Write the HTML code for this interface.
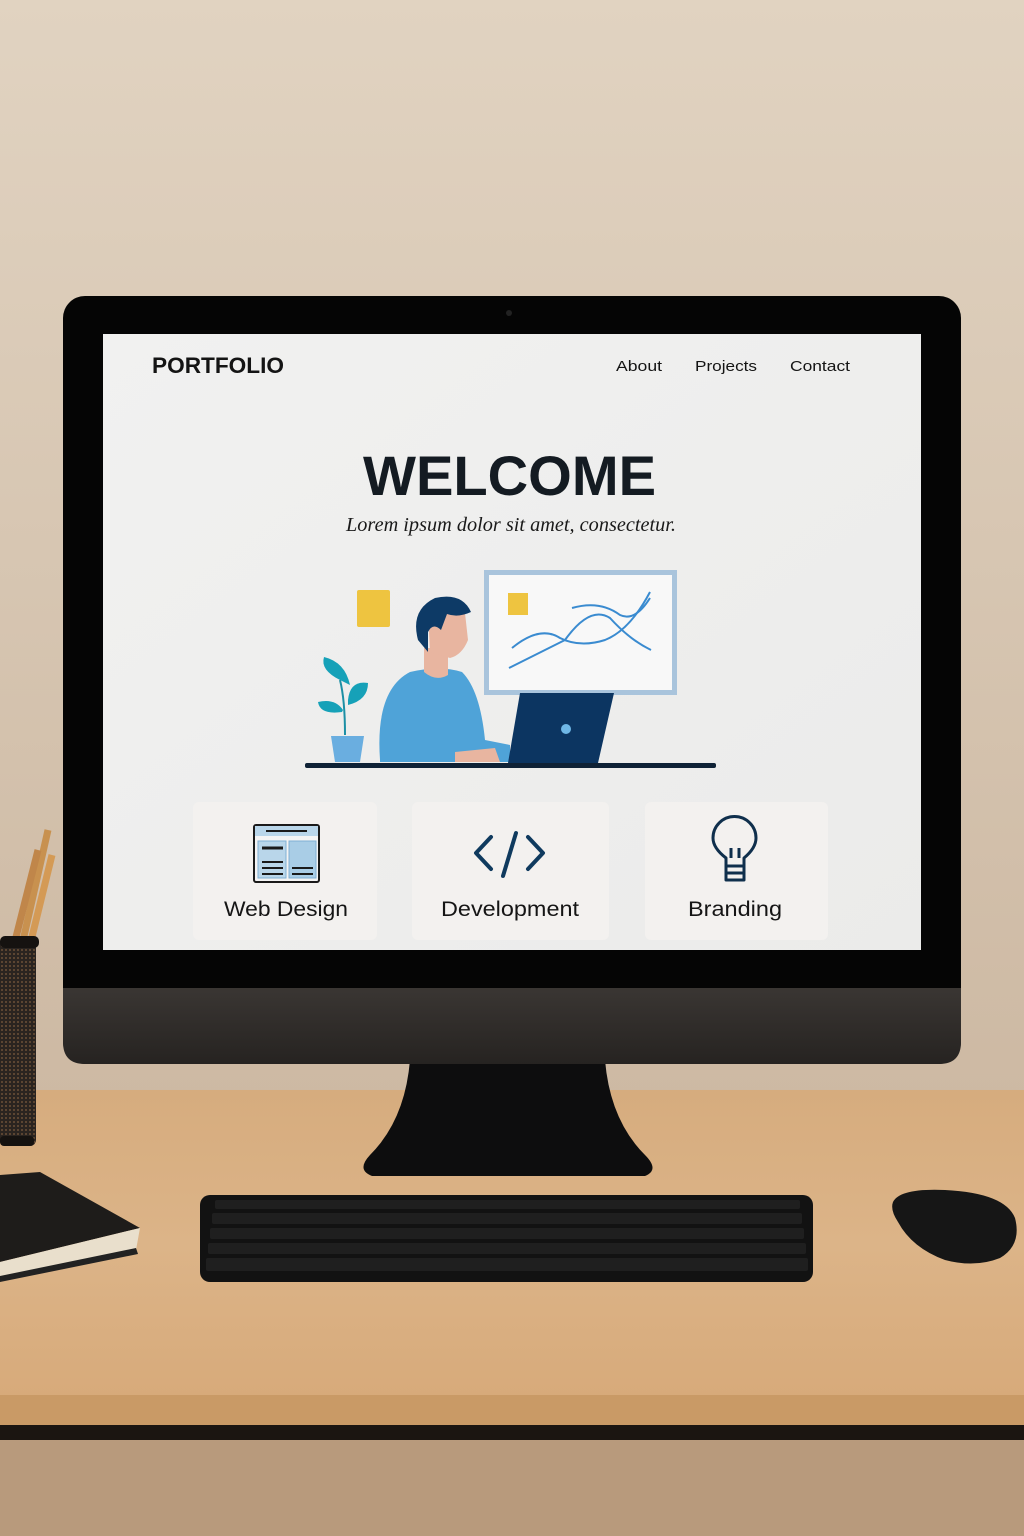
<!DOCTYPE html>
<html><head><meta charset="utf-8"><style>html,body{margin:0;padding:0;background:#ddd0bf}svg{display:block}</style></head>
<body>
<svg width="1024" height="1536" viewBox="0 0 1024 1536" xmlns="http://www.w3.org/2000/svg">
<defs>
<linearGradient id="wall" x1="0" y1="0" x2="0" y2="1">
<stop offset="0" stop-color="#e1d3c1"/><stop offset="1" stop-color="#cdb9a3"/></linearGradient>
<linearGradient id="desk" x1="0" y1="0" x2="0" y2="1">
<stop offset="0" stop-color="#d6ac7e"/><stop offset="0.5" stop-color="#dcb488"/><stop offset="1" stop-color="#d7aa7a"/></linearGradient>
<linearGradient id="screen" x1="0" y1="0" x2="1" y2="1">
<stop offset="0" stop-color="#f1f1f0"/><stop offset="1" stop-color="#ebebea"/></linearGradient>
<linearGradient id="chin" x1="0" y1="0" x2="0" y2="1">
<stop offset="0" stop-color="#3a3633"/><stop offset="1" stop-color="#262321"/></linearGradient>
<pattern id="mesh" width="4" height="4" patternUnits="userSpaceOnUse"><rect width="4" height="4" fill="#2a2420"/><circle cx="2" cy="2" r="1" fill="#6b5038"/></pattern>
</defs>
<rect width="1024" height="1100" fill="url(#wall)"/>
<rect y="1090" width="1024" height="310" fill="url(#desk)"/>
<rect y="1395" width="1024" height="30" fill="#c99a66"/>
<rect y="1425" width="1024" height="15" fill="#1b1511"/>
<rect y="1440" width="1024" height="96" fill="#b89a7c"/>
<!-- pencil cup -->
<line x1="22" y1="945" x2="48" y2="830" stroke="#c8914f" stroke-width="7"/>
<line x1="30" y1="945" x2="52" y2="855" stroke="#d49a55" stroke-width="7"/>
<line x1="14" y1="945" x2="38" y2="850" stroke="#c0864a" stroke-width="7"/>
<rect x="0" y="938" width="36" height="208" rx="6" fill="url(#mesh)"/>
<rect x="0" y="936" width="39" height="12" rx="5" fill="#151210"/>
<rect x="0" y="1136" width="34" height="10" rx="4" fill="#151210"/>
<!-- book -->
<polygon points="0,1175 40,1172 140,1228 0,1262" fill="#1e1c1a"/>
<polygon points="0,1262 140,1228 136,1250 0,1278" fill="#e9dfcc"/>
<polygon points="0,1276 136,1248 138,1254 0,1282" fill="#222"/>
<!-- stand -->
<path d="M410 1060 L605 1060 Q610 1120 645 1155 Q660 1170 645 1176 L372 1176 Q356 1170 370 1155 Q405 1120 410 1060 Z" fill="#0d0d0e"/>
<!-- monitor -->
<rect x="63" y="296" width="898" height="768" rx="22" fill="#050505"/>
<path d="M63 988 L961 988 L961 1042 Q961 1064 939 1064 L85 1064 Q63 1064 63 1042 Z" fill="url(#chin)"/>
<circle cx="509" cy="313" r="3" fill="#222"/>
<rect x="103" y="334" width="818" height="616" fill="url(#screen)"/>
<text x="152" y="373" font-family="Liberation Sans, sans-serif" font-weight="bold" font-size="22" fill="#141414" textLength="132" lengthAdjust="spacingAndGlyphs">PORTFOLIO</text>
<g font-family="Liberation Sans, sans-serif" font-size="15" fill="#141414">
<text x="616" y="371" textLength="46" lengthAdjust="spacingAndGlyphs">About</text>
<text x="695" y="371" textLength="62" lengthAdjust="spacingAndGlyphs">Projects</text>
<text x="790" y="371" textLength="60" lengthAdjust="spacingAndGlyphs">Contact</text>
</g>
<text x="363" y="495" font-family="Liberation Sans, sans-serif" font-weight="bold" font-size="56" fill="#141b22" textLength="293" lengthAdjust="spacingAndGlyphs">WELCOME</text>
<text x="346" y="531" font-family="Liberation Serif, serif" font-style="italic" font-size="20" fill="#1a1a1a" textLength="330" lengthAdjust="spacingAndGlyphs">Lorem ipsum dolor sit amet, consectetur.</text>
<!-- illustration -->
<rect x="357" y="590" width="33" height="37" rx="2" fill="#eec440"/>
<rect x="484" y="570" width="193" height="125" fill="#a9c4dc"/>
<rect x="489" y="575" width="183" height="115" fill="#f8f8f8"/>
<rect x="508" y="593" width="20" height="22" fill="#eec440"/>
<g fill="none" stroke="#3a8bd0" stroke-width="2">
<path d="M512 648 Q540 625 560 638 Q580 648 605 640 Q630 630 650 592"/>
<path d="M509 668 Q545 650 565 640 Q590 605 610 618 Q630 640 651 650"/>
<path d="M572 608 Q600 600 620 615 Q635 622 650 598"/>
</g>
<path d="M345 735 Q345 700 340 680" stroke="#1c8fa5" stroke-width="2" fill="none"/>
<path d="M340 680 Q320 670 324 657 Q345 662 350 685 Z" fill="#16a1b8"/>
<path d="M348 700 Q350 680 368 683 Q368 700 348 705 Z" fill="#16a1b8"/>
<path d="M342 712 Q320 715 318 702 Q335 698 343 710 Z" fill="#16a1b8"/>
<path d="M331 736 L364 736 L360 762 L335 762 Z" fill="#6aaee0"/>
<path d="M380 760 Q375 690 410 672 Q440 665 462 672 Q480 690 485 740 L510 745 L510 762 L380 762 Z" fill="#4fa3d8"/>
<path d="M424 648 L448 648 L448 675 Q436 682 424 672 Z" fill="#e8b5a0"/>
<path d="M428 612 Q442 598 464 604 L468 640 Q462 655 450 658 L430 652 Z" fill="#e8b5a0"/>
<path d="M418 640 Q410 610 435 598 Q462 592 471 612 Q458 618 447 614 L441 630 Q433 622 428 632 L428 652 Z" fill="#0d3a66"/>
<path d="M455 752 L495 748 L500 762 L455 762 Z" fill="#e8b5a0"/>
<path d="M520 693 L614 693 L598 763 L508 763 Z" fill="#0c3561"/>
<circle cx="566" cy="729" r="5" fill="#6fb7e6"/>
<rect x="305" y="763" width="411" height="5" rx="2" fill="#0f2236"/>
<!-- cards -->
<rect x="193" y="802" width="184" height="138" rx="6" fill="#f3f1ef"/>
<rect x="412" y="802" width="197" height="138" rx="6" fill="#f3f1ef"/>
<rect x="645" y="802" width="183" height="138" rx="6" fill="#f3f1ef"/>
<rect x="254" y="825" width="65" height="57" rx="2" fill="#f4f4f4" stroke="#1a1a1a" stroke-width="2"/>
<rect x="255" y="826" width="63" height="10" fill="#b9d6ea"/>
<line x1="266" y1="831" x2="307" y2="831" stroke="#1a1a1a" stroke-width="2"/>
<rect x="258" y="841" width="28" height="37" fill="#b9d6ea" stroke="#7fb0d4"/>
<rect x="289" y="841" width="27" height="37" fill="#a9cde6" stroke="#7fb0d4"/>
<g stroke="#1a1a1a" stroke-width="2"><line x1="262" y1="848" x2="283" y2="848" stroke-width="3"/><line x1="262" y1="862" x2="283" y2="862"/><line x1="262" y1="868" x2="283" y2="868"/><line x1="262" y1="874" x2="283" y2="874"/><line x1="292" y1="868" x2="313" y2="868"/><line x1="292" y1="874" x2="313" y2="874"/></g>
<g fill="none" stroke="#0f3a5e" stroke-width="4" stroke-linecap="round" stroke-linejoin="round">
<path d="M491 837 L476 853 L491 869"/><path d="M528 837 L543 853 L528 869"/><path d="M516 833 L503 876"/></g>
<g fill="none" stroke="#0f2f4c" stroke-width="3" stroke-linejoin="round">
<path d="M726 866 L726 858 Q713 848 713 838 A21 21 0 1 1 756 838 Q756 848 744 858 L744 866 Z"/>
<path d="M726 866 L744 866 L744 880 L726 880 Z"/><line x1="726" y1="873" x2="744" y2="873"/>
<path d="M731 858 L731 848 M739 858 L739 848"/></g>
<g font-family="Liberation Sans, sans-serif" font-size="21" fill="#151515">
<text x="224" y="916" textLength="124" lengthAdjust="spacingAndGlyphs">Web Design</text>
<text x="441" y="916" textLength="138" lengthAdjust="spacingAndGlyphs">Development</text>
<text x="688" y="916" textLength="94" lengthAdjust="spacingAndGlyphs">Branding</text>
</g>
<!-- keyboard -->
<rect x="200" y="1195" width="613" height="87" rx="10" fill="#121212"/>
<g fill="#1f1f1f">
<rect x="215" y="1200" width="585" height="9" rx="2"/>
<rect x="212" y="1213" width="590" height="11" rx="2"/>
<rect x="210" y="1228" width="594" height="11" rx="2"/>
<rect x="208" y="1243" width="598" height="11" rx="2"/>
<rect x="206" y="1258" width="602" height="13" rx="2"/>
</g>
<!-- mouse -->
<path d="M893 1202 Q900 1188 945 1190 Q1005 1193 1015 1218 Q1022 1245 1000 1258 Q975 1268 945 1260 Q912 1248 898 1222 Q890 1210 893 1202 Z" fill="#161616"/>
</svg>
</body></html>
